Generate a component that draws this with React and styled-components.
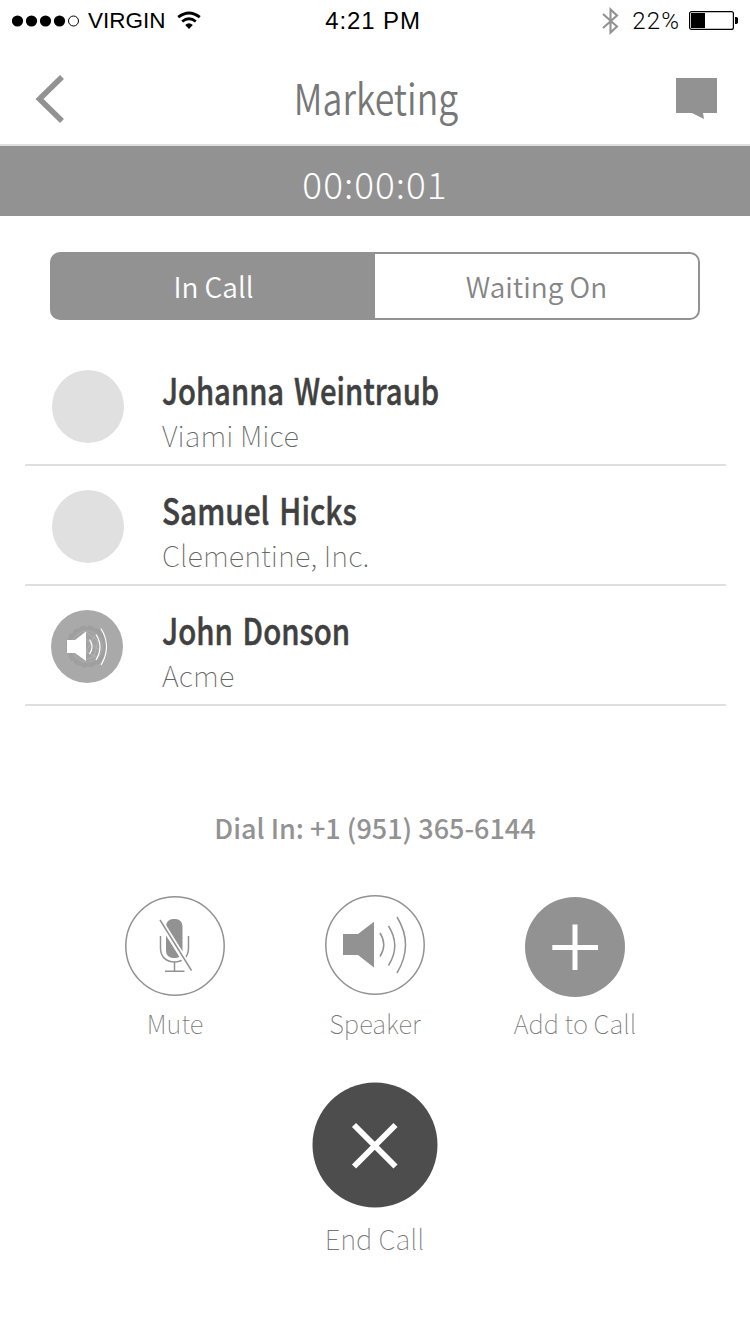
import React from "react";
import styled, { createGlobalStyle } from "styled-components";

const GlobalStyle = createGlobalStyle`
  * { box-sizing: border-box; }
  body { margin: 0; background: #fff; }
`;

const humanist = `"Noto Sans CJK SC", "Noto Sans", sans-serif`;
const gray = "#929292";
const rule = "#dfdfdf";

const Screen = styled.main`
  width: 750px;
  height: 1334px;
  display: flex;
  flex-direction: column;
  background: #fff;
  font-family: ${humanist};
  overflow: hidden;
`;

const Text = styled.span`
  display: block;
  width: max-content;
  margin: 0;
  white-space: nowrap;
  font-size: ${(p) => p.$size}px;
  line-height: ${(p) => p.$line || 40}px;
  font-weight: ${(p) => p.$weight || 300};
  color: ${(p) => p.$color || gray};
  letter-spacing: ${(p) => p.$spacing || 0}px;
  transform: scaleX(${(p) => p.$stretch || 1});
  transform-origin: ${(p) => p.$origin || "center"};
`;

const StatusBar = styled.header`
  height: 41px;
  display: grid;
  grid-template-columns: 1fr auto 1fr;
  align-items: center;
  padding: 0 12px;
`;

const StatusGroup = styled.div`
  display: flex;
  align-items: center;
  justify-content: ${(p) => (p.$end ? "flex-end" : "flex-start")};
`;

const StatusText = styled(Text)`
  font-family: "Liberation Sans", Arial, sans-serif;
  font-weight: 400;
  color: #000;
  padding-top: 1px;
`;

const Clock = styled(StatusText)`
  margin-right: 4px;
`;

const Carrier = styled(StatusText)`
  margin: 0 11px 0 8px;
`;

const Percent = styled(StatusText)`
  font-family: Roboto, "Liberation Sans", sans-serif;
  font-weight: 300;
  margin: 0 9px 0 13px;
`;

const NavBar = styled.nav`
  height: 105px;
  padding: 0 33px 0 34px;
  border-bottom: 2px solid ${rule};
  display: flex;
  align-items: center;
  justify-content: space-between;
`;

const Title = styled(Text)`
  padding-top: 7px;
`;

const NavButton = styled.button`
  width: 44px;
  height: 60px;
  padding: 0;
  border: 0;
  background: none;
  display: flex;
  align-items: center;
  justify-content: ${(p) => (p.$end ? "flex-end" : "flex-start")};
  margin-top: 13px;
`;

const TimerBar = styled.div`
  height: 70px;
  background: ${gray};
  display: flex;
  justify-content: center;
  padding-top: 17px;
`;

const Segments = styled.div`
  height: 68px;
  margin: 36px 50px 0;
  border: 2px solid ${gray};
  border-radius: 10px;
  display: grid;
  grid-template-columns: 1fr 1fr;
  background: linear-gradient(90deg, ${gray} 50%, #fff 50%) border-box;
`;

const Segment = styled.div`
  display: flex;
  justify-content: center;
  padding-top: 12px;
`;

const List = styled.ul`
  list-style: none;
  margin: 26px 24.5px 0;
  padding: 0;
`;

const Row = styled.li`
  height: 120px;
  border-bottom: 2px solid ${rule};
  display: flex;
  padding: 24px 0 0 ${(p) => (p.$speaking ? 26.5 : 27.5)}px;
  gap: ${(p) => (p.$speaking ? 39 : 38)}px;
`;

const Avatar = styled.div`
  width: 72px;
  height: 73px;
  border-radius: 50%;
  background: ${(p) => (p.$speaking ? "#a9a9a9" : "#e0e0e0")};
`;

const Person = styled.div`
  display: flex;
  flex-direction: column;
  margin-top: -3px;
`;

const PersonName = styled(Text)`
  word-spacing: 4px;
  -webkit-text-stroke: 0.5px currentColor;
`;

const DialIn = styled.div`
  display: flex;
  justify-content: center;
  margin-top: 102px;
`;

const Actions = styled.div`
  display: grid;
  grid-template-columns: repeat(3, 200px);
  justify-content: center;
  margin-top: 47px;
`;

const Action = styled.div`
  display: flex;
  flex-direction: column;
  align-items: center;
  gap: ${(p) => p.$gap}px;
  padding-top: ${(p) => p.$drop || 0}px;
`;

const EndAction = styled(Action)`
  margin: 39px 1px 0 0;
`;

const Icon = styled.svg`
  display: block;
  flex: none;
`;

function Signal() {
  return (
    <Icon width="68" height="12" viewBox="0 0 68 12">
      {[5.5, 19.5, 33.5, 47.5].map((x) => (
        <circle key={x} cx={x} cy="6" r="5.6" />
      ))}
      <circle cx="61.5" cy="6" r="5" fill="none" stroke="#000" />
    </Icon>
  );
}

function Wifi() {
  return (
    <Icon width="24" height="19" viewBox="0 0 24 19">
      <g fill="none" stroke="#000" strokeWidth="2.8">
        <path d="M1.2 6.2Q12 -2.3 22.8 6.2" />
        <path d="M5.2 10.5Q12 4.9 18.8 10.5" />
      </g>
      <path d="M8.2 13.9Q12 10.8 15.8 13.9L12 18Z" />
    </Icon>
  );
}

function Bluetooth() {
  return (
    <Icon width="17" height="28" viewBox="0 0 17 28" fill="none" stroke={gray} strokeWidth="2.1">
      <path d="M1 7L15 19.5L8.5 25.5V2.5L15 8.5L1 21" />
    </Icon>
  );
}

function Battery() {
  return (
    <Icon width="49" height="19" viewBox="0 0 49 19">
      <rect x="0.6" y="0.6" width="43.8" height="17.8" rx="2" fill="none" stroke="#000" strokeWidth="1.2" />
      <rect x="2" y="2" width="14" height="15" />
      <path d="M46 6H47.5L49 7V12L47.5 13H46Z" />
    </Icon>
  );
}

function SpeakerIcon() {
  return (
    <Icon width="100" height="100" viewBox="0 0 100 100">
      <circle cx="50" cy="50" r="49.2" fill="#fff" stroke={gray} strokeWidth="1.5" />
      <path d="M18 39H33L49 26.7V72.5L33 60H18Z" fill={gray} />
      <g fill="none" stroke={gray} strokeWidth="1.5">
        <path d="M55 38Q62.5 49.5 55 61.5" />
        <path d="M63.5 31Q76 50.5 63.5 70.5" />
        <path d="M72 22Q89 49.5 72 78" />
      </g>
    </Icon>
  );
}

function MuteIcon() {
  return (
    <Icon width="100" height="100" viewBox="0 0 100 100" fill="none" stroke={gray} strokeWidth="1.5">
      <circle cx="50" cy="50" r="49.2" />
      <rect x="41" y="23" width="16.5" height="39" rx="7" fill={gray} stroke="none" />
      <path d="M35.5 40V52C35.5 61 41.5 66 49.5 66S63.5 61 63.5 52V40M49.5 66V75M40 75.3H59.5" />
      <path d="M35 24.5L66.5 75" stroke="#fff" strokeWidth="5.5" />
      <path d="M35 24L66.5 74.5" />
    </Icon>
  );
}

function AddIcon() {
  return (
    <Icon width="100" height="100" viewBox="0 0 100 100">
      <circle cx="50" cy="50" r="50" fill={gray} />
      <path d="M27.3 50.5H73M50 27.5V73" stroke="#fff" strokeWidth="5" />
    </Icon>
  );
}

function EndIcon() {
  return (
    <Icon width="126" height="126" viewBox="0 0 126 126">
      <circle cx="63" cy="63" r="62.5" fill="#4d4d4d" />
      <path d="M42 43L83.5 84.5M83.5 43L42 84.5" stroke="#fff" strokeWidth="5.8" />
    </Icon>
  );
}

function SpeakingBadge() {
  return (
    <Icon width="72" height="73" viewBox="0 0 72 73" fill="none">
      <circle cx="36" cy="36.5" r="18.5" fill="#a2a2a2" stroke="#9f9f9f" strokeWidth="3" />
      <circle cx="36" cy="36.5" r="20" stroke="#9f9f9f" strokeWidth="2.2" strokeDasharray="5 2.9" />
      <circle cx="36" cy="36.5" r="15.5" stroke="#adadad" strokeWidth="0.8" />
      <path d="M35 22L47 31L43 47L33 50M35 29L48 40M44 25L35 42L47 48" stroke="#b7b7b7" strokeWidth="0.8" />
      <path d="M16 30H24L35 21.5V51L24 43H16Z" fill="#fff" />
      <path d="M38.5 29.5Q43.5 36.5 38.5 44M45 24.5Q53 37 45 50M50 18.5Q61 36.5 50 55" stroke="#fff" strokeWidth="1.2" />
    </Icon>
  );
}

const people = [
  { name: "Johanna Weintraub", company: "Viami Mice", stretch: 0.8 },
  { name: "Samuel Hicks", company: "Clementine, Inc.", stretch: 0.815 },
  { name: "John Donson", company: "Acme", speaking: true, stretch: 0.805 },
];

export default function App() {
  return (
    <Screen>
      <GlobalStyle />
      <StatusBar>
        <StatusGroup>
          <Signal />
          <Carrier $size={22.5}>VIRGIN</Carrier>
          <Wifi />
        </StatusGroup>
        <Clock $size={24} $spacing={0.9}>4:21 PM</Clock>
        <StatusGroup $end>
          <Bluetooth />
          <Percent $size={24} $spacing={1.1}>22%</Percent>
          <Battery />
        </StatusGroup>
      </StatusBar>
      <NavBar>
        <NavButton aria-label="Back">
          <Icon width="32" height="50" viewBox="0 0 32 50">
            <path d="M28 3L5.5 25L28 47" fill="none" stroke={gray} strokeWidth="5.6" />
          </Icon>
        </NavButton>
        <Title as="h1" $size={43} $line={60} $weight={350} $color="#777" $stretch={0.83}>Marketing</Title>
        <NavButton $end aria-label="Messages">
          <Icon width="41" height="42" viewBox="0 0 41 42">
            <path d="M0 0H41V35H27L28 41L16 35H0Z" fill={gray} />
          </Icon>
        </NavButton>
      </NavBar>
      <TimerBar>
        <Text $size={37} $color="#fff" $spacing={1}>00:00:01</Text>
      </TimerBar>
      <Segments>
        <Segment><Text $size={28} $weight={350} $color="#fff">In Call</Text></Segment>
        <Segment><Text $size={28} $weight={350} $color="#858585">Waiting On</Text></Segment>
      </Segments>
      <List>
        {people.map((p) => (
          <Row key={p.name} $speaking={p.speaking}>
            <Avatar $speaking={p.speaking}>{p.speaking && <SpeakingBadge />}</Avatar>
            <Person>
              <PersonName $size={36.5} $line={45} $weight={500} $color="#404040" $stretch={p.stretch} $origin="left">{p.name}</PersonName>
              <Text $size={29} $line={44} $weight={100} $color="#666" $spacing={0.1} $origin="left">{p.company}</Text>
            </Person>
          </Row>
        ))}
      </List>
      <DialIn><Text $size={27} $weight={500}>Dial In: +1 (951) 365-6144</Text></DialIn>
      <Actions>
        <Action $gap={7} $drop={1}><MuteIcon /><Text $size={25.7} $weight={100} $color="#777">Mute</Text></Action>
        <Action $gap={8}><SpeakerIcon /><Text $size={25.7} $weight={100} $color="#777">Speaker</Text></Action>
        <Action $gap={6} $drop={2}><AddIcon /><Text $size={25.7} $weight={100} $color="#777">Add to Call</Text></Action>
      </Actions>
      <EndAction $gap={10}><EndIcon /><Text $size={27.5} $weight={100} $color="#777">End Call</Text></EndAction>
    </Screen>
  );
}
